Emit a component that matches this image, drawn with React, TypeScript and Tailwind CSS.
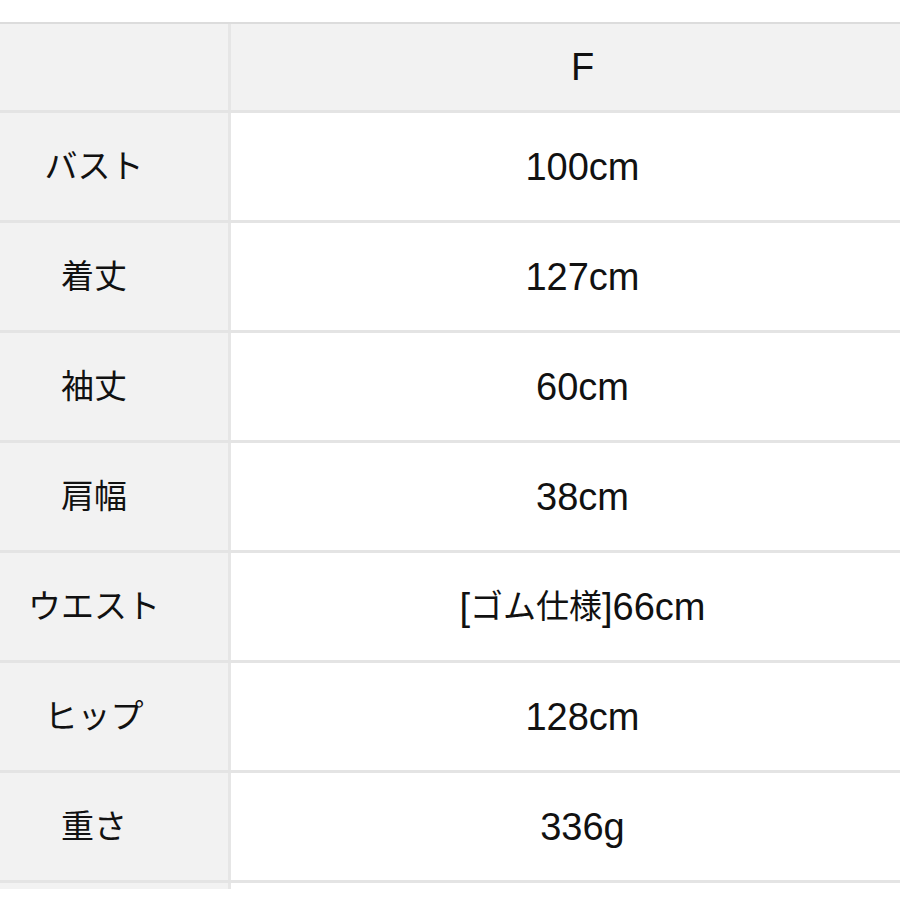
const rows: { label: string; value: React.ReactNode }[] = [
  { label: 'バスト', value: '100cm' },
  { label: '着丈', value: '127cm' },
  { label: '袖丈', value: '60cm' },
  { label: '肩幅', value: '38cm' },
  {
    label: 'ウエスト',
    value: (
      <>
        [<span className="text-[33px]">ゴム仕様</span>]66cm
      </>
    ),
  },
  { label: 'ヒップ', value: '128cm' },
  { label: '重さ', value: '336g' },
];

const font = "font-['Liberation_Sans','Noto_Sans_CJK_JP',sans-serif]";

export default function App() {
  return (
    <div className={`w-[900px] h-[900px] overflow-hidden bg-white pt-[22px] text-[#111] ${font}`}>
      <div className="-ml-[40px] w-[974px] border-t-2 border-[#dcdcdc]">
        {/* header */}
        <div className="grid grid-cols-[271px_1fr] h-[89px] border-b-[3px] border-[#e4e4e4] bg-[#f2f2f2]">
          <div className="border-r-[3px] border-[#e6e6e6]" />
          <div className="flex items-center justify-center text-[38px] leading-none">F</div>
        </div>

        {rows.map((r) => (
          <div key={r.label} className="grid grid-cols-[271px_1fr] h-[110px] border-b-[3px] border-[#e4e4e4]">
            <div className="flex items-center justify-center bg-[#f2f2f2] border-r-[3px] border-[#e6e6e6] text-[33px] leading-none">
              {r.label}
            </div>
            <div className="flex items-center justify-center bg-white text-[38px] leading-none">
              {r.value}
            </div>
          </div>
        ))}

        <div className="grid grid-cols-[271px_1fr] h-[6px]">
          <div className="bg-[#f2f2f2] border-r-[3px] border-[#e6e6e6]" />
          <div />
        </div>
      </div>
    </div>
  );
}
